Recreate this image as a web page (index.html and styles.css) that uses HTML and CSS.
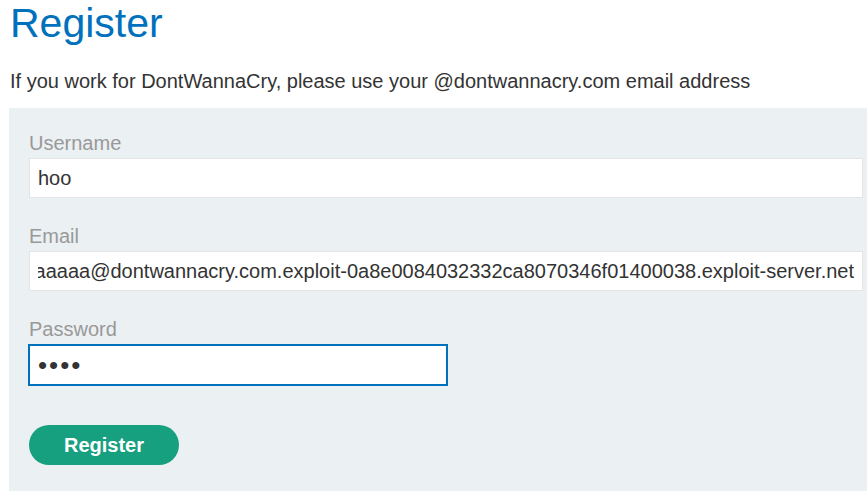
FILE: index.html
```html
<!DOCTYPE html>
<html lang="en">
<head>
<meta charset="utf-8">
<title>Register</title>
<link rel="stylesheet" href="styles.css">
</head>
<body>
<main class="page">
  <h1 class="title">Register</h1>
  <p class="intro">If you work for DontWannaCry, please use your @dontwannacry.com email address</p>
  <form class="panel">
    <label class="label" for="username">Username</label>
    <input class="field" id="username" type="text" value="hoo">
    <label class="label" for="email">Email</label>
    <input class="field field-end" id="email" type="text" value="aaaaaaaaaa@dontwannacry.com.exploit-0a8e0084032332ca8070346f01400038.exploit-server.net">
    <label class="label" for="password">Password</label>
    <input class="field field-focus" id="password" type="password" value="hooo">
    <button class="btn" type="button">Register</button>
  </form>
</main>
</body>
</html>
```

FILE: styles.css
```css
html, body {
  margin: 0;
  padding: 0;
  background: #ffffff;
  overflow: hidden;
}
body {
  font-family: "Liberation Sans", Arial, sans-serif;
  font-size: 20px;
  color: #333333;
}
.page {
  padding-left: 9px;
}
.title {
  margin: 0 0 0 1px;
  font-size: 41px;
  font-weight: normal;
  line-height: normal;
  color: #0071bc;
}
.intro {
  margin: 23px 0 15px 1px;
  line-height: 23px;
}
.panel {
  display: flex;
  flex-direction: column;
  align-items: flex-start;
  background: #ebf0f2;
  padding: 24px 4px 60px 20px;
}
.label {
  display: block;
  line-height: 23px;
  color: #999999;
  margin-bottom: 3px;
}
.field {
  box-sizing: border-box;
  width: 100%;
  height: 40px;
  margin: 0 0 27px 0;
  padding: 0 8px;
  border: 1px solid #e4e4e4;
  background: #ffffff;
  font-family: "Liberation Sans", Arial, sans-serif;
  font-size: 20px;
  color: #333333;
  outline: none;
}
.field-end {
  direction: rtl;
}
.field-focus {
  width: 420px;
  height: 42px;
  margin-left: -1px;
  border: 2px solid #0071bc;
  margin-bottom: 39px;
  font-size: 26px;
  letter-spacing: 2px;
}
.btn {
  width: 150px;
  height: 40px;
  border: none;
  border-radius: 20px;
  background: #17a07f;
  color: #ffffff;
  font-family: "Liberation Sans", Arial, sans-serif;
  font-size: 20px;
  font-weight: bold;
  padding: 0;
}
```
